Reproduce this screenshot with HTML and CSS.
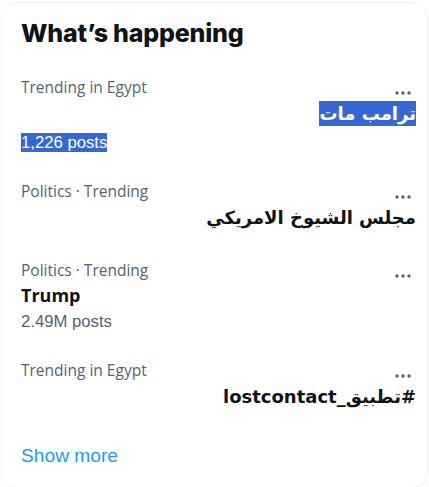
FILE: index.html
```html
<!DOCTYPE html>
<html lang="en">
<head>
<meta charset="utf-8">
<title>What's happening</title>
<link rel="stylesheet" href="styles.css">
</head>
<body>
<aside class="card">
  <h2 class="heading">What’s happening</h2>

  <div class="trend">
    <div class="meta-row">
      <span class="meta">Trending in Egypt</span>
      <svg class="more" viewBox="0 0 22 6" width="22" height="6"><circle cx="3" cy="3" r="1.7"/><circle cx="9" cy="3" r="1.7"/><circle cx="15" cy="3" r="1.7"/></svg>
    </div>
    <div class="title" dir="rtl"><span class="sel">ترامب مات</span></div>
    <div class="posts"><span class="sel">1,226 posts</span></div>
  </div>

  <div class="trend">
    <div class="meta-row">
      <span class="meta">Politics · Trending</span>
      <svg class="more" viewBox="0 0 22 6" width="22" height="6"><circle cx="3" cy="3" r="1.7"/><circle cx="9" cy="3" r="1.7"/><circle cx="15" cy="3" r="1.7"/></svg>
    </div>
    <div class="title" dir="rtl">مجلس الشيوخ الامريكي</div>
  </div>

  <div class="trend">
    <div class="meta-row">
      <span class="meta">Politics · Trending</span>
      <svg class="more" viewBox="0 0 22 6" width="22" height="6"><circle cx="3" cy="3" r="1.7"/><circle cx="9" cy="3" r="1.7"/><circle cx="15" cy="3" r="1.7"/></svg>
    </div>
    <div class="title title-latin">Trump</div>
    <div class="posts">2.49M posts</div>
  </div>

  <div class="trend">
    <div class="meta-row">
      <span class="meta">Trending in Egypt</span>
      <svg class="more" viewBox="0 0 22 6" width="22" height="6"><circle cx="3" cy="3" r="1.7"/><circle cx="9" cy="3" r="1.7"/><circle cx="15" cy="3" r="1.7"/></svg>
    </div>
    <div class="title" dir="rtl">#تطبيق_lostcontact</div>
  </div>

  <a class="show-more" href="#">Show more</a>
</aside>
</body>
</html>
```

FILE: styles.css
```css
html, body {
  margin: 0;
  padding: 0;
  background: #ffffff;
}

.card {
  box-sizing: border-box;
  margin: 2px 1px 0 1px;
  height: 486px;
  border: 1px solid #eff3f4;
  border-radius: 16px;
  display: flex;
  flex-direction: column;
  font-family: "Open Sans", "DejaVu Sans", sans-serif;
  color: #0f1419;
}

.heading {
  margin: 0;
  padding: 13px 14px 5px 19px;
  font-family: "Inter", "Liberation Sans", sans-serif;
  font-size: 25px;
  font-weight: 800;
  line-height: 34px;
  letter-spacing: -0.2px;
  color: #0f1419;
}

.trend {
  padding: 21px 11px 5px 19px;
  display: flex;
  flex-direction: column;
}

.meta-row {
  display: flex;
  align-items: flex-end;
  justify-content: space-between;
  height: 22px;
}

.meta {
  font-size: 15.5px;
  line-height: 22px;
  color: #536471;
}

.more {
  fill: #536471;
  margin-bottom: 2px;
}

.title {
  margin-top: 1px;
  font-family: "DejaVu Sans", "Liberation Sans", sans-serif;
  font-size: 18px;
  font-weight: 700;
  line-height: 30px;
  color: #0f1419;
}

.title-latin {
  font-family: "Open Sans", "DejaVu Sans", sans-serif;
  font-size: 18px;
  line-height: 26px;
}

.posts {
  margin-top: 2px;
  margin-bottom: -1px;
  font-family: "Liberation Sans", sans-serif;
  font-size: 16.7px;
  line-height: 24px;
  color: #536471;
}

.sel {
  background: #3568d4;
  color: #ffffff;
}

.title .sel {
  padding: 2px 0;
}

.show-more {
  padding: 27px 19px 0;
  font-family: "Liberation Sans", sans-serif;
  font-size: 19.2px;
  line-height: 24px;
  color: #1d9bf0;
  text-decoration: none;
}
```
